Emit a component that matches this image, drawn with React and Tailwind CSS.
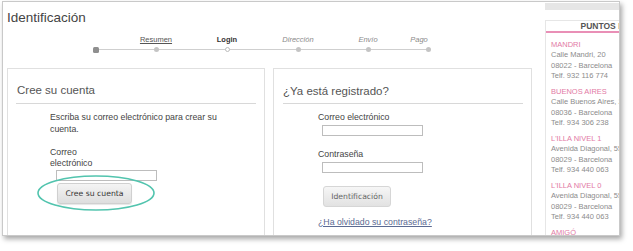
import React from "react";

const font = { fontFamily: '"Liberation Sans", Arial, sans-serif' };

function Step({ label, kind, dot, shift }) {
  return (
    <div className="flex w-[40px] flex-col items-center">
      <div className={"flex h-[10px] items-center justify-center whitespace-nowrap text-[7.5px] leading-[10px] " + (shift ? "-translate-x-[9px]" : "")}>
        {kind === "link" && <span className="text-[#555] underline">{label}</span>}
        {kind === "bold" && <span className="font-bold text-[#333]">{label}</span>}
        {kind === "italic" && <span className="italic text-[#8a8a8a]">{label}</span>}
      </div>
      <div className="mt-[1px] flex h-[7px] items-center justify-center">
        {dot === "home" && <div className="h-[6px] w-[6px] rounded-[1.5px] bg-[#8f8f8f]" />}
        {dot === "fill" && <div className="h-[5px] w-[5px] rounded-full bg-[#c4c4c4]" />}
        {dot === "hollow" && <div className="h-[5px] w-[5px] rounded-full border border-[#bdbdbd] bg-white" />}
      </div>
    </div>
  );
}

function Shop({ name, lines }) {
  return (
    <div className="mb-[6px]">
      <div className="whitespace-nowrap text-[7.5px] leading-[10.25px] text-[#e27aa5]">{name}</div>
      {lines.map((l) => (
        <div key={l} className="whitespace-nowrap text-[7.5px] leading-[10.25px] text-[#8c8c8c]">{l}</div>
      ))}
    </div>
  );
}

export default function App() {
  return (
    <div className="relative h-[251px] w-[633px] overflow-hidden bg-white pl-[2px] pt-[1px]" style={font}>
      <div className="flex h-[235px] w-[618px] overflow-hidden border border-[#c9c9c9] bg-white shadow-[2px_3px_5px_rgba(0,0,0,0.35)]">
        {/* main column */}
        <div className="ml-[4px] w-[525px] shrink-0">
          <div className="pt-[8px] text-[13.5px] leading-[16px] text-[#444]">Identificación</div>

          {/* steps */}
          <div className="relative mt-[9px] flex pl-[69px]">
            <div className="absolute left-[89px] top-[14px] h-[1px] w-[332px] bg-[#cfcfcf]" />
            <div className="relative flex">
              <Step dot="home" />
              <div className="w-[20px]" />
              <Step label="Resumen" kind="link" dot="fill" />
              <div className="w-[31px]" />
              <Step label="Login" kind="bold" dot="hollow" />
              <div className="w-[31px]" />
              <Step label="Dirección" kind="italic" dot="fill" />
              <div className="w-[30px]" />
              <Step label="Envío" kind="italic" dot="fill" />
              <div className="w-[20px]" />
              <Step label="Pago" kind="italic" dot="fill" shift />
            </div>
          </div>

          {/* panels */}
          <div className="mt-[15px] flex gap-[8px]">
            {/* left panel */}
            <div className="h-[200px] w-[258px] shrink-0 border border-[#e0e0e0]">
              <div className="pl-[9px] pt-[14px] text-[11.5px] leading-[14px] text-[#555]">Cree su cuenta</div>
              <div className="mx-[8px] mt-[6px] h-[1px] bg-[#d8d8d8]" />
              <div className="pl-[42px]">
                <p className="mt-[7px] w-[182px] text-[8.75px] leading-[12px] text-[#444]">
                  Escriba su correo electrónico para crear su cuenta.
                </p>
                <div className="mt-[11.5px] text-[8.75px] leading-[11px] text-[#444]">
                  Correo
                  <br />
                  electrónico
                </div>
                <div className="ml-[6px] mt-[1.5px] h-[11px] w-[101px] border border-[#bdbdbd] bg-white" />
                <div className="relative ml-[7px] mt-[2px] w-[75px]">
                  <div
                    className="flex h-[21px] w-[75px] items-center justify-center rounded-[3px] border border-[#d0d0d0] bg-gradient-to-b from-[#f4f4f4] to-[#dedede] text-[7.7px] text-[#333] shadow-[0_1px_1px_rgba(0,0,0,0.1)]"
                    style={{ fontFamily: '"DejaVu Sans", Verdana, sans-serif' }}
                  >
                    Cree su cuenta
                  </div>
                  <svg
                    className="absolute left-[-20px] top-[-8px]"
                    width="118"
                    height="36"
                    viewBox="0 0 118 36"
                  >
                    <ellipse cx="59" cy="18" rx="58" ry="17" fill="none" stroke="#52c4ae" strokeWidth="1.6" />
                  </svg>
                </div>
              </div>
            </div>

            {/* right panel */}
            <div className="h-[200px] w-[259px] shrink-0 border border-[#e0e0e0]">
              <div className="pl-[9px] pt-[15px] text-[11.5px] leading-[14px] text-[#555]">¿Ya está registrado?</div>
              <div className="ml-[9px] mr-[8px] mt-[5px] h-[1px] bg-[#d8d8d8]" />
              <div className="pl-[44px]">
                <div className="mt-[7.5px] text-[8.75px] leading-[11px] text-[#444]">Correo electrónico</div>
                <div className="ml-[4px] mt-[2.5px] h-[11px] w-[101px] border border-[#bdbdbd] bg-white" />
                <div className="mt-[12.5px] text-[8.75px] leading-[11px] text-[#444]">Contraseña</div>
                <div className="ml-[4px] mt-[2.5px] h-[11px] w-[101px] border border-[#bdbdbd] bg-white" />
                <div
                  className="ml-[5px] mt-[13px] flex h-[21px] w-[68px] items-center justify-center rounded-[3px] border border-[#d6d6d6] bg-gradient-to-b from-[#f6f6f6] to-[#e2e2e2] text-[7.7px] text-[#666]"
                  style={{ fontFamily: '"DejaVu Sans", Verdana, sans-serif' }}
                >
                  Identificación
                </div>
                <div className="mt-[9.5px] text-[8.75px] leading-[11px] text-[#5b6a92] underline">
                  ¿Ha olvidado su contraseña?
                </div>
              </div>
            </div>
          </div>
        </div>

        {/* sidebar */}
        <div className="ml-[13px] w-[150px] shrink-0">
          <div className="mt-[1px] h-[7px] bg-[#e6e6e6]" />
          <div className="mt-[10px] h-[230px] border-l border-t border-[#e6e6e6]">
            <div className="flex h-[12px] items-center justify-center border-b-2 border-[#e98fb6] text-[8.5px] font-bold text-[#555]">
              PUNTOS DE VENTA
            </div>
            <div className="pl-[5px] pt-[7px]">
              <Shop name="MANDRI" lines={["Calle Mandri, 20", "08022 - Barcelona", "Telf. 932 116 774"]} />
              <Shop name="BUENOS AIRES" lines={["Calle Buenos Aires, 23", "08036 - Barcelona", "Telf. 934 306 238"]} />
              <Shop name="L'ILLA NIVEL 1" lines={["Avenida Diagonal, 557", "08029 - Barcelona", "Telf. 934 440 063"]} />
              <Shop name="L'ILLA NIVEL 0" lines={["Avenida Diagonal, 557", "08029 - Barcelona", "Telf. 934 440 063"]} />
              <Shop name="AMIGÓ" lines={[]} />
            </div>
          </div>
        </div>
      </div>
    </div>
  );
}
